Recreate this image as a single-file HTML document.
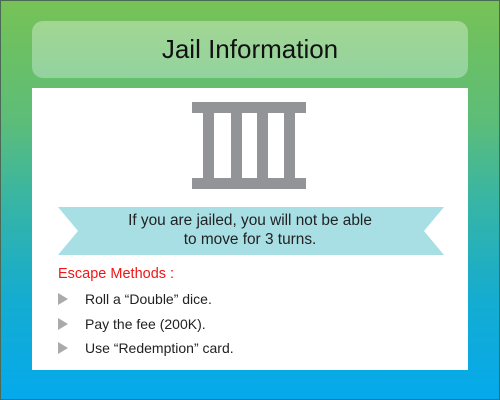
<!DOCTYPE html>
<html><head><style>
body{margin:0}
.f{position:relative;width:498px;height:398px;border:1px solid #4a6a55;background:linear-gradient(#76c256 0%,#5dbd78 30%,#38b5a4 50%,#14acd0 75%,#05a9ec 100%);font-family:"Liberation Sans",sans-serif;overflow:hidden}
.h{position:absolute;left:31px;top:20px;width:436px;height:57px;border-radius:11px;background:linear-gradient(#a2d692,#93d3a0);text-align:center;line-height:57px;font-size:26px;color:#111}
.p{position:absolute;left:31px;top:87px;width:436px;height:282px;background:#fff}
.b{position:absolute;background:#939497}
.t{position:absolute;left:0;width:436px;text-align:center;font-size:15.4px;color:#222;line-height:19px}
.e{position:absolute;left:26px;top:178px;color:#f01616;font-size:14.5px}
.li{position:absolute;left:53px;font-size:14px;color:#222}
.tr{position:absolute;left:26px;width:0;height:0;border-left:10px solid #aaa;border-top:6px solid transparent;border-bottom:6px solid transparent}
</style></head><body><div class="f">
<div class="h">Jail Information</div>
<div class="p">
<div class="b" style="left:160px;top:14px;width:114px;height:11px"></div>
<div class="b" style="left:160px;top:90px;width:114px;height:11px"></div>
<div class="b" style="left:171px;top:25px;width:11px;height:65px"></div>
<div class="b" style="left:199px;top:25px;width:11px;height:65px"></div>
<div class="b" style="left:225px;top:25px;width:11px;height:65px"></div>
<div class="b" style="left:252px;top:25px;width:11px;height:65px"></div>
<svg style="position:absolute;left:26px;top:119px" width="386" height="48"><polygon points="0,0 386,0 366,24 386,48 0,48 20,24" fill="#a8dfe5"/></svg>
<div class="t" style="top:123px">If you are jailed, you will not be able<br>to move for 3 turns.</div>
<div class="e">Escape Methods :</div>
<div class="tr" style="top:205px"></div><div class="li" style="top:203px">Roll a “Double” dice.</div>
<div class="tr" style="top:230px"></div><div class="li" style="top:228px">Pay the fee (200K).</div>
<div class="tr" style="top:254px"></div><div class="li" style="top:252px">Use “Redemption” card.</div>
</div>
</div></body></html>
